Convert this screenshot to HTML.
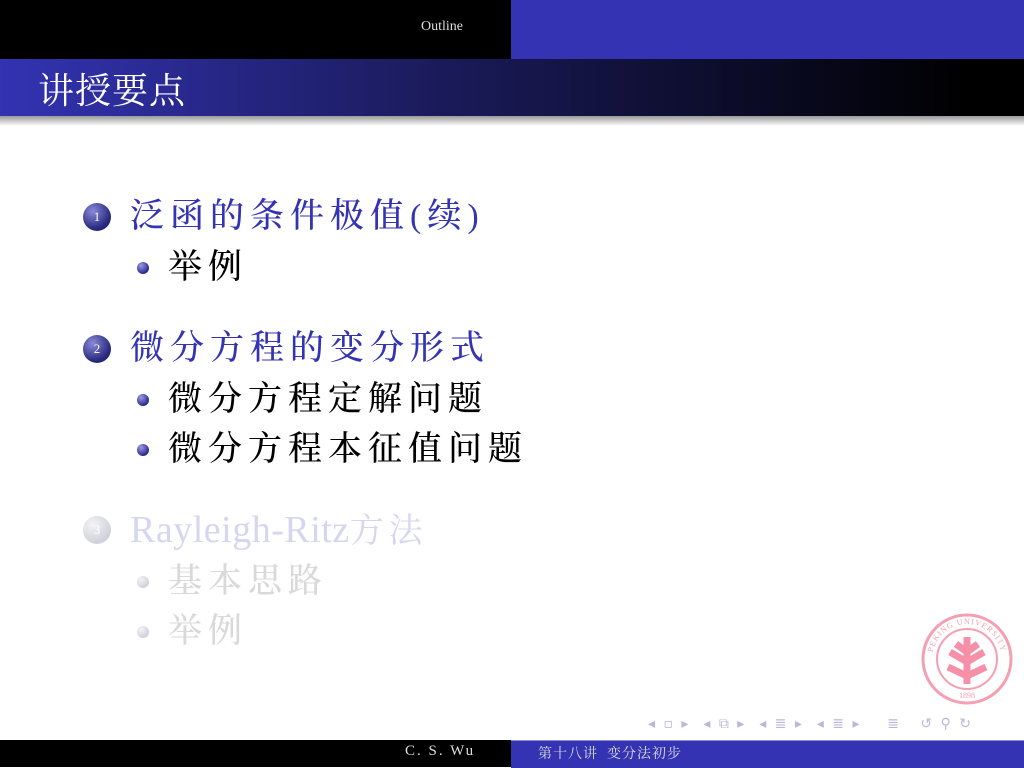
<!DOCTYPE html>
<html><head><meta charset="utf-8"><style>
body{margin:0;width:1024px;height:767px;position:relative;background:#fff;overflow:hidden;font-family:"Liberation Serif","Noto Serif CJK SC",serif}
.a{position:absolute;white-space:nowrap}
.h{font-size:34px;letter-spacing:6px;line-height:40px;font-weight:500}
.blue{color:#3333b3}.blk{color:#000}.gray{color:#d9d9d9}.lb{color:#d6d6f0}
.ball{position:absolute;width:28px;height:28px;border-radius:50%;background:radial-gradient(circle at 35% 30%,#8a8ad8,#2a2a80 65%,#1a1a50);color:#fff;font-size:13px;text-align:center;line-height:28px}
.dot{position:absolute;width:12px;height:12px;border-radius:50%;background:radial-gradient(circle at 35% 30%,#9a9ae0,#2a2a90 70%)}
.fade{background:radial-gradient(circle at 35% 30%,#f4f4f4,#d0d0dc 70%)}
</style></head><body>
<div class="a" style="left:0;top:0;width:511px;height:59px;background:#000"></div>
<div class="a" style="left:511px;top:0;width:513px;height:59px;background:#3333b3"></div>
<div class="a" style="left:421px;top:19px;color:#ddd;font-size:14px">Outline</div>
<div class="a" style="left:0;top:59px;width:1024px;height:57px;background:linear-gradient(90deg,#3333b3,#1c1c60 40%,#000 95%)"></div>
<div class="a" style="left:0;top:116px;width:1024px;height:10px;background:linear-gradient(#999,#fff)"></div>
<div class="a" style="left:38px;top:70px;color:#fff;font-size:36px;line-height:42px;letter-spacing:1px">讲授要点</div>

<div class="ball" style="left:83px;top:203px">1</div>
<div class="a h blue" style="left:130px;top:197px">泛函的条件极值(续)</div>
<div class="dot" style="left:137px;top:262px"></div>
<div class="a h blk" style="left:168px;top:248px">举例</div>

<div class="ball" style="left:83px;top:335px">2</div>
<div class="a h blue" style="left:130px;top:329px">微分方程的变分形式</div>
<div class="dot" style="left:137px;top:394px"></div>
<div class="a h blk" style="left:168px;top:380px">微分方程定解问题</div>
<div class="dot" style="left:137px;top:444px"></div>
<div class="a h blk" style="left:168px;top:430px">微分方程本征值问题</div>

<div class="ball fade" style="left:83px;top:516px;color:#fff">3</div>
<div class="a lb" style="left:130px;top:510px;font-size:38px;line-height:40px;letter-spacing:0.5px">Rayleigh-Ritz<span style="letter-spacing:5px;font-size:34px">方法</span></div>
<div class="dot fade" style="left:137px;top:576px"></div>
<div class="a h gray" style="left:168px;top:562px">基本思路</div>
<div class="dot fade" style="left:137px;top:626px"></div>
<div class="a h gray" style="left:168px;top:612px">举例</div>

<svg class="a" style="left:920px;top:612px" width="94" height="94" viewBox="0 0 94 94">
<circle cx="47" cy="47" r="44" fill="none" stroke="#f4a0b0" stroke-width="3"/>
<circle cx="47" cy="47" r="30" fill="none" stroke="#f4a0b0" stroke-width="2"/>
<path id="arc" d="M12 47A35 35 0 0 1 82 47" fill="none"/>
<text font-size="8" fill="#f4a0b0" letter-spacing="1"><textPath href="#arc" startOffset="50%" text-anchor="middle">PEKING UNIVERSITY</textPath></text>
<text x="47" y="86" font-size="8" fill="#f4a0b0" text-anchor="middle">1898</text>
<path d="M47 25V72M30 40L47 50L64 40M28 55L47 64L66 55M36 32L47 40L58 32" stroke="#f590a8" stroke-width="7" fill="none"/>
</svg>

<div class="a" style="left:648px;top:716px;color:#b8b8dc;font-size:14px;letter-spacing:2px;font-family:'DejaVu Sans',sans-serif">◂ ▫ ▸ &nbsp;◂ ⧉ ▸ &nbsp;◂ ≣ ▸ &nbsp;◂ ≣ ▸ &nbsp;&nbsp;&nbsp;≣ &nbsp;&nbsp;↺ ⚲ ↻</div>

<div class="a" style="left:0;top:740px;width:511px;height:27px;background:#000"></div>
<div class="a" style="left:511px;top:740px;width:513px;height:27px;background:#3333b3;border-top:1px solid #8a8ad0"></div>
<div class="a" style="left:405px;top:743px;color:#ddd;font-size:15px;letter-spacing:2px">C. S. Wu</div>
<div class="a" style="left:538px;top:743px;color:#ddd;font-size:14px;letter-spacing:1px">第十八讲 &nbsp;变分法初步</div>
</body></html>
